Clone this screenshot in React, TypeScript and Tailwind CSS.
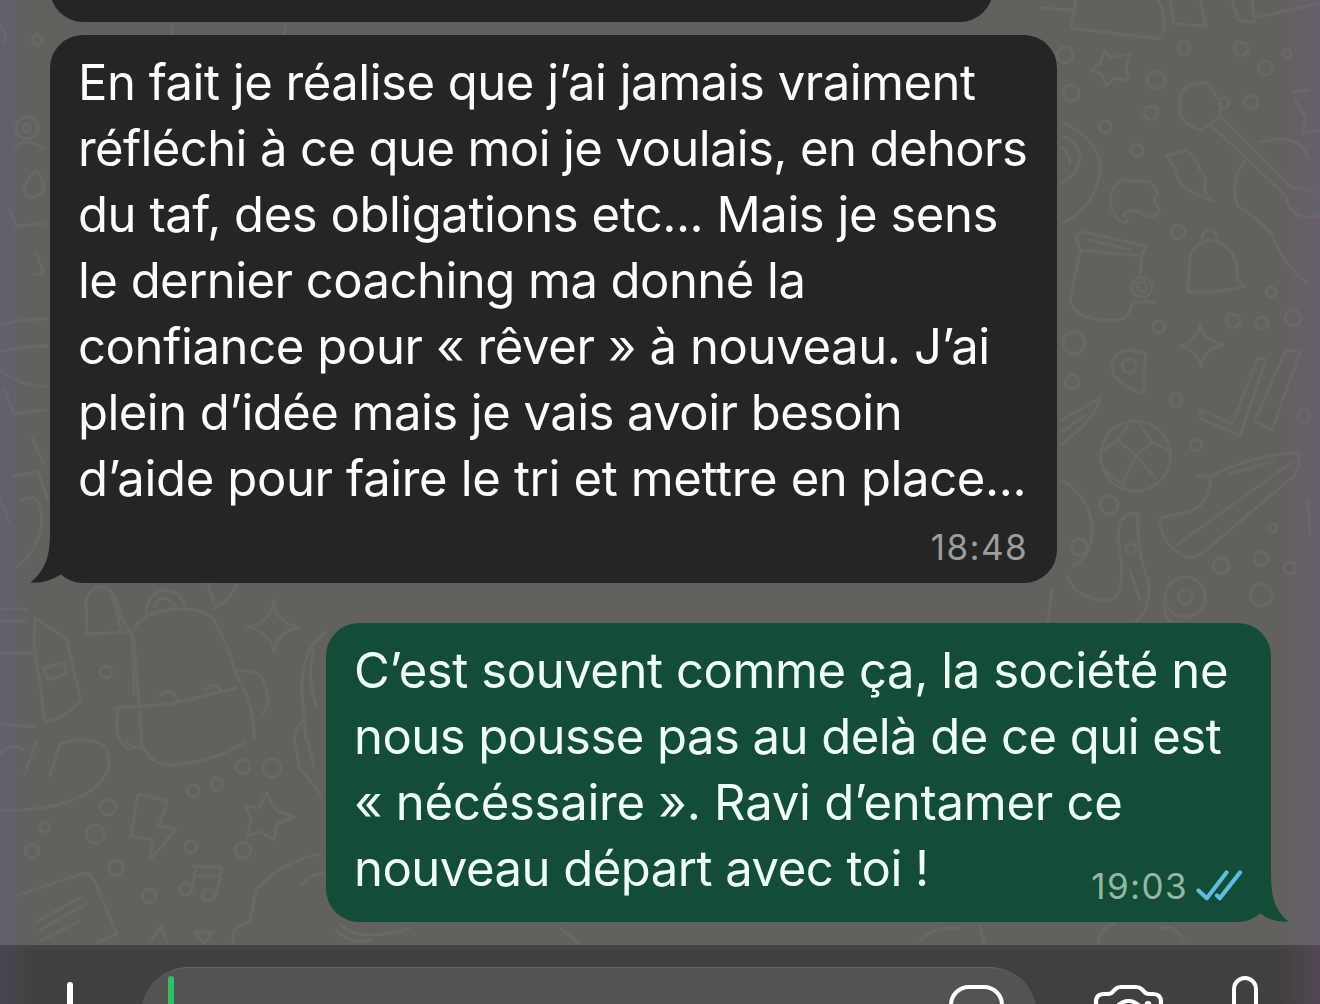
const received = [
  { text: 'En fait je réalise que j’ai jamais vraiment', tracking: 'tracking-[-0.49px]' },
  { text: 'réfléchi à ce que moi je voulais, en dehors', tracking: 'tracking-[-0.6px]' },
  { text: 'du taf, des obligations etc... Mais je sens', tracking: 'tracking-[-0.46px]' },
  { text: 'le dernier coaching ma donné la', tracking: 'tracking-[-0.53px]' },
  { text: 'confiance pour « rêver » à nouveau. J’ai', tracking: 'tracking-[-0.38px]' },
  { text: 'plein d’idée mais je vais avoir besoin', tracking: 'tracking-[-0.54px]' },
  { text: 'd’aide pour faire le tri et mettre en place...', tracking: 'tracking-[-0.35px]' },
]

const sent = [
  { text: 'C’est souvent comme ça, la société ne', tracking: 'tracking-[-0.42px]' },
  { text: 'nous pousse pas au delà de ce qui est', tracking: 'tracking-[-0.53px]' },
  { text: '« nécéssaire ». Ravi d’entamer ce', tracking: 'tracking-[-0.24px]' },
  { text: 'nouveau départ avec toi !', tracking: 'tracking-[-0.5px]' },
]

// small circles scattered over the wallpaper: x, y, radius
const dots = [
  [106, 672, 6], [108, 807, 8], [45, 827, 5], [95, 834, 9], [32, 851, 7], [116, 868, 7],
  [149, 896, 7], [193, 791, 6], [217, 784, 6], [243, 767, 7], [272, 768, 9], [243, 850, 8],
  [191, 847, 6], [186, 889, 6], [208, 895, 6], [27, 128, 11], [27, 128, 4], [37, 40, 5],
  [1184, 48, 6], [1241, 49, 7], [1265, 68, 7], [1287, 54, 4], [1156, 80, 9], [1224, 103, 5],
  [1251, 102, 7], [1151, 113, 7], [1105, 127, 6], [1137, 150, 6], [1071, 93, 8], [1065, 55, 8],
  [1178, 232, 7], [1142, 287, 10], [1142, 287, 5], [1271, 292, 5], [1159, 327, 6], [1233, 321, 7],
  [1262, 323, 6], [1293, 318, 8], [1074, 343, 11], [1072, 382, 7], [1176, 400, 6], [1129, 366, 7],
  [1196, 445, 6], [1109, 505, 9], [1221, 566, 8], [1261, 559, 7], [1290, 568, 6], [1261, 595, 11],
  [1185, 597, 20], [1185, 597, 7], [1273, 528, 4], [1304, 416, 6], [1079, 547, 8], [1131, 549, 5],
]

const doodles = [
  // backpack
  'M134 695 L132 634 Q138 612 176 609 Q208 608 215 622 Q229 648 236 675 Q256 708 254 740 M134 640 L142 745 Q150 764 170 765 Q215 762 245 742',
  'M115 708 L170 704 L236 688 M160 695 Q170 686 178 700 M205 690 Q215 680 222 692 M118 710 Q112 740 130 750 M237 672 Q268 665 268 704 L262 716',
  // can, pill, lines
  'M35 618 L66 638 L81 700 Q66 718 45 722 L34 642 Z M44 668 L64 662 L66 674 L48 680 Z M0 609 H26 M0 621 H26 M0 653 H36 M0 724 L36 727',
  'M87 634 L86 600 Q92 584 106 588 Q118 596 120 615 L130 632 Z M110 590 L122 632 M146 612 Q148 592 165 590 Q182 592 184 606 M154 606 Q162 590 175 606 M208 584 L214 604 M236 586 Q230 600 215 608',
  // four point stars
  'M274 600 Q275 623 299 627 Q276 632 274 653 Q271 632 247 627 Q271 624 274 600 Z',
  'M1200 325 Q1202 341 1224 344 Q1203 350 1201 366 Q1196 349 1179 346 Q1197 342 1200 325 Z',
  // left middle
  'M0 810 Q60 812 92 790 Q116 770 106 748 Q92 734 60 744 L50 776 M36 742 L24 776 M0 754 Q12 742 24 750 M125 740 Q135 752 142 746',
  'M138 794 L167 801 L159 826 L176 829 L150 860 L153 840 L131 836 Z',
  'M267 793 L276 810 L294 817 L277 824 L274 840 L260 832 L247 836 L251 819 L245 806 L259 808 Z',
  'M193 866 L222 868 L216 896 M198 876 L218 876 M196 868 L192 888',
  'M16 896 L84 873 Q92 873 96 884 L117 934 L98 942 M36 922 L80 898 M40 930 L86 904 M42 940 L78 922 M150 942 L161 926 L167 942 M195 932 L212 932 L204 944 Z',
  'M250 922 L256 890 Q280 862 320 854 M250 922 Q228 926 234 944 M302 884 Q312 872 325 874 M294 740 L300 768 L322 796 M308 742 L314 768 M326 632 Q300 650 302 692 L306 740 M314 650 Q306 672 316 706 M294 740 Q298 720 306 722',
  // left margin
  'M0 325 Q24 318 48 319 M0 352 Q24 345 48 346 M0 370 Q24 388 46 386 M4 388 L14 414 L46 410 M32 438 L44 464 M12 476 L38 472 L48 500 M0 498 L10 524 M36 252 L44 274 H34 M0 26 Q8 32 4 44 M22 500 Q40 490 42 520 Q40 548 18 566',
  'M16 150 Q20 135 44 148 M28 180 Q40 160 44 190 Q30 205 24 190 Z M10 210 L16 226 L44 224',
  // top right shapes
  'M1040 8 L1072 10 M1076 0 L1071 28 L1160 39 Q1170 20 1158 0 M1170 0 L1174 24 L1206 26 L1200 0 M1232 0 L1238 20 L1255 22 L1252 0 M1255 18 L1316 4',
  'M1105 50 L1110 58 L1130 54 L1126 68 L1128 80 L1114 78 L1106 86 L1102 74 L1091 70 L1100 64 Z',
  // paint brush
  'M1180 104 Q1178 88 1194 84 L1208 82 L1216 96 Q1226 110 1214 122 L1200 130 Q1186 126 1180 114 Z M1220 116 L1294 190 M1212 126 L1284 194 M1260 142 Q1300 132 1308 158',
  'M1246 160 Q1228 180 1238 206 Q1260 220 1272 234 Q1284 266 1306 282 M1286 198 Q1292 222 1318 216 M1294 92 L1308 90 M1294 98 L1306 118 L1302 134 L1320 130 M1290 186 L1314 192',
  // mitten and leaf
  'M1112 210 Q1106 190 1122 180 L1150 182 L1158 192 L1154 200 L1160 212 Q1150 222 1140 212 Q1130 208 1124 214 L1128 222 Q1118 224 1112 210 Z',
  'M1166 156 L1186 150 Q1196 156 1200 170 L1206 180 L1204 192 L1214 202 L1196 194 Q1176 186 1176 168 Z',
  'M1062 122 Q1100 140 1100 168 Q1098 205 1062 224 M1062 136 Q1078 140 1080 158 Q1078 174 1062 182 M1062 148 Q1070 152 1070 164',
  // jar
  'M1076 236 L1084 232 L1146 246 L1142 256 L1080 250 Z M1080 252 L1070 300 M1142 256 L1140 274 M1090 240 L1130 250 M1070 300 Q1075 322 1118 320 Q1130 318 1132 302 L1156 302',
  // bell
  'M1188 290 L1190 256 Q1198 240 1212 240 Q1230 244 1236 262 L1238 280 L1246 286 Q1215 294 1188 292 M1202 238 Q1204 228 1212 230 Q1218 234 1216 240',
  // pin
  'M1144 394 Q1112 384 1112 366 Q1114 350 1130 350 L1146 354 Q1144 372 1144 394 Z',
  // double tick
  'M1200 410 L1206 412 L1232 424 L1258 358 L1266 360 L1240 436 L1200 418 Z M1256 418 L1286 350 L1300 352 L1272 430 L1256 422',
  // carrot, ball
  'M1062 420 L1100 398 Q1098 416 1062 444 M1062 432 L1084 416',
  'M1136 421 A35 35 0 1 1 1135 421 M1136 456 L1118 440 L1104 450 M1136 456 L1152 442 L1168 450 M1136 456 L1122 484 M1136 456 L1156 478 M1118 440 L1128 424 M1152 442 L1140 424 M1106 472 L1122 484 L1128 490',
  // shoe
  'M1160 518 L1188 512 Q1212 504 1210 476 L1196 476 M1210 476 Q1250 456 1298 452 Q1302 466 1294 476 L1206 550 Q1190 564 1178 552 Q1160 540 1160 518 M1178 544 L1292 462 M1228 474 L1272 462',
  // bottle and lower blob
  'M1062 480 Q1094 500 1092 536 Q1090 556 1074 566 M1138 514 Q1118 510 1118 540 Q1126 580 1116 598 Q1098 606 1076 590 L1066 576 M1138 514 Q1136 552 1148 580 Q1152 610 1136 620 M1130 570 L1140 600',
  'M1308 502 L1310 534 M1052 590 L1048 620 M1165 596 Q1162 620 1172 622',
  // strip between the bubbles and the input bar
  'M172 26 V34 M286 26 L284 34 M336 930 Q350 945 372 940 M340 924 Q360 944 410 928 M560 928 L580 944 M920 940 Q940 924 960 928 M980 924 L984 944 M1098 944 Q1100 926 1116 924 M1160 928 Q1176 924 1184 942',
]

function Wallpaper() {
  return (
    <div className="absolute inset-0 bg-[#62615e]">
      <svg viewBox="0 0 1320 1004" className="size-full blur-[0.7px]" fill="none" stroke="#696866" strokeWidth="3" strokeLinecap="round" strokeLinejoin="round">
        {doodles.map((d) => <path key={d} d={d} />)}
        {dots.map(([x, y, r], i) => <circle key={i} cx={x} cy={y} r={r} />)}
      </svg>
    </div>
  )
}

function Ticks() {
  return (
    <svg viewBox="0 0 48 32" className="mb-[3px] h-8 w-12" fill="none" stroke="#5cbde6" strokeWidth="4.2" strokeLinecap="round" strokeLinejoin="round">
      <path d="M2.5 21.5 L10.8 29.2 L30.5 3.5 M21 26.400 L23.800 29.200 L44 3.500" />
    </svg>
  )
}

function InputBar() {
  return (
    <footer className="relative flex h-[59px] items-start overflow-hidden border-t-[5px] border-[#454340] bg-[#42403e]">
      <div className="ml-[67px] mt-8 h-10 w-1.5 shrink-0 rounded-full bg-white" />
      <div className="ml-[68px] mt-[17px] flex h-24 w-[896px] shrink-0 items-start justify-between rounded-[48px] border-t border-[#676563] bg-[#555351] pl-[27px] pr-[33px]">
        <div className="mt-2 h-16 w-1.5 rounded-full bg-[#2fc067]" />
        <div className="mt-[17px] size-[55px] rounded-[20px] border-[4px] border-white" />
      </div>
      <svg viewBox="0 0 72 56" className="ml-[56px] mt-[34px] h-14 w-[72px] shrink-0" fill="none" stroke="#fff" strokeWidth="4.2" strokeLinejoin="round">
        <path d="M3 50 V18 Q3 10 11 10 H15 Q18 10 20 7.5 L22.5 5 Q24.5 3 28 3 H43 Q46.5 3 48.5 5 L51 7.5 Q53 10 56 10 H60 Q68 10 68 18 V50 Z" />
        <circle cx="35.5" cy="31" r="14" />
        <circle cx="55" cy="20.5" r="3.4" fill="#fff" stroke="none" />
      </svg>
      <div className="ml-[67px] mt-[26px] h-16 w-[26px] shrink-0 rounded-full border-[4px] border-white" />
    </footer>
  )
}

export default function App() {
  return (
    <div className="relative flex h-[1004px] w-[1320px] flex-col overflow-hidden font-['Inter',sans-serif] antialiased">
      <Wallpaper />

      <main className="relative flex h-[945px] shrink-0 flex-col items-start">
        <div className="-mt-[60px] ml-[50px] h-[82px] w-[943px] shrink-0 rounded-[33px] bg-[#242625]" />

        <section className="relative ml-[50px] mt-[13px] h-[548px] w-[1007px] rounded-[33px] bg-[#242625] pl-7 pr-[30px] pt-[15px]">
          {received.map(({ text, tracking }) => (
            <p key={text} className={`whitespace-nowrap text-[49px] leading-[66px] text-[#fcfcfc] ${tracking}`}>{text}</p>
          ))}
          <time className="-mr-[1px] mt-[18px] block text-right text-[35px] leading-[35px] tracking-[1.4px] text-[#9c9d9c]">18:48</time>
          <svg viewBox="0 0 50 50" className="absolute -left-5 bottom-0 size-[50px]" fill="#242625">
            <path d="M20 0 C20 26 14 38 0.5 49.5 Q16 51 31.5 41 L44 30 L40 0 Z" />
          </svg>
        </section>

        <section className="relative ml-[326px] mt-10 h-[299px] w-[945px] rounded-[33px] bg-[#144d37] pl-7 pr-[27px] pt-[15px]">
          {sent.slice(0, 3).map(({ text, tracking }) => (
            <p key={text} className={`whitespace-nowrap text-[49px] leading-[66px] text-[#effff7] ${tracking}`}>{text}</p>
          ))}
          <div className="flex items-end justify-between">
            <p className={`whitespace-nowrap text-[49px] leading-[66px] text-[#effff7] ${sent[3].tracking}`}>{sent[3].text}</p>
            <div className="-mb-[2px] flex items-end gap-2">
              <time className="text-[35px] leading-[35px] tracking-[1.4px] text-[#93b8a5]">19:03</time>
              <Ticks />
            </div>
          </div>
          <svg viewBox="0 0 50 50" className="absolute -right-[18px] bottom-0 size-[50px]" fill="#144d37">
            <path d="M32 0 C32 26 36 38 49.5 49.5 Q33 51 20.5 41 L8 30 L12 0 Z" />
          </svg>
        </section>
      </main>

      <InputBar />

      {/* coloured glow along both screen edges */}
      <div className="pointer-events-none absolute inset-y-0 left-0 w-9 bg-gradient-to-r from-[#5560a0]/20 to-transparent" />
      <div className="pointer-events-none absolute inset-y-0 right-0 w-10 bg-gradient-to-l from-[#7a5a95]/25 to-transparent" />
    </div>
  )
}
